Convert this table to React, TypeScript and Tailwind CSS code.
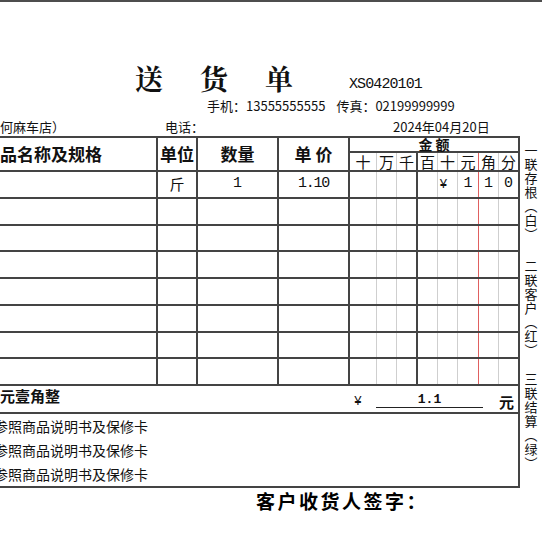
const line = 'border-[#444]';

const amountCols = [
  { w: 'w-[27px]', br: 'border-r border-[#cfcfcf]', label: '十' },
  { w: 'w-[20px]', br: 'border-r border-[#cfcfcf]', label: '万' },
  { w: 'w-[21px]', br: 'border-r-2 border-[#444]', label: '千' },
  { w: 'w-[20px]', br: 'border-r border-[#cfcfcf]', label: '百' },
  { w: 'w-[20px]', br: 'border-r border-[#cfcfcf]', label: '十' },
  { w: 'w-[21px]', br: 'border-r border-[#e06060]', label: '元' },
  { w: 'w-[20px]', br: 'border-r border-[#cfcfcf]', label: '角' },
  { w: 'w-[19px]', br: '', label: '分' },
];

const rows = [
  { unit: '斤', qty: '1', price: '1.10', amount: ['', '', '', '', '¥', '1', '1', '0'] },
  { unit: '', qty: '', price: '', amount: [] },
  { unit: '', qty: '', price: '', amount: [] },
  { unit: '', qty: '', price: '', amount: [] },
  { unit: '', qty: '', price: '', amount: [] },
  { unit: '', qty: '', price: '', amount: [] },
  { unit: '', qty: '', price: '', amount: [] },
  { unit: '', qty: '', price: '', amount: [] },
];

// vertical forms of the brackets so they stack like the printed copy labels
const copies = [
  ['一', '联', '存', '根', '︵', '白', '︶'],
  ['二', '联', '客', '户', '︵', '红', '︶'],
  ['三', '联', '结', '算', '︵', '绿', '︶'],
];

function DataRow({ unit, qty, price, amount }: (typeof rows)[number]) {
  return (
    <div className={`flex flex-1 border-b-2 ${line}`}>
      <div className={`w-[158px] border-r-2 ${line}`} />
      <div className={`flex w-[40px] items-center justify-center border-r-2 ${line} text-[15px]`}>
        {unit}
      </div>
      <div
        className={`flex w-[81px] items-center justify-center border-r-2 ${line} font-['Liberation_Mono',monospace] text-[15px]`}
      >
        {qty}
      </div>
      <div
        className={`flex w-[71px] items-center justify-center border-r-2 ${line} font-['Liberation_Mono',monospace] text-[15px] tracking-[-1.2px]`}
      >
        {price}
      </div>
      <div className={`flex w-[170px] border-r-2 ${line}`}>
        {amountCols.map((c, i) => (
          <div
            key={i}
            className={`flex ${c.w} ${c.br} items-center justify-center font-['Liberation_Mono',monospace] text-[15px]`}
          >
            <span className={amount[i] === '¥' ? 'pr-[8px] text-[13px]' : ''}>{amount[i]}</span>
          </div>
        ))}
      </div>
    </div>
  );
}

export default function App() {
  return (
    <div className="h-[542px] w-[542px] overflow-hidden bg-white font-['Noto_Sans_CJK_SC',sans-serif] text-[#111]">
      <div className="h-[2px] bg-[#4d4d4d]" />
      <div className="flex">
        <div className="w-[520px]">
          <div className="flex items-end pt-[62px]">
            <div className="ml-[135px] font-['Noto_Serif_CJK_SC','Noto_Sans_CJK_SC',serif] text-[28px] leading-[28px] font-bold tracking-[37px]">
              送货单
            </div>
            <div className="ml-[19px] font-['Liberation_Mono',monospace] text-[15px] leading-[15px] tracking-[-0.9px]">
              XS0420101
            </div>
          </div>

          <div className="mt-[7px] flex pl-[207px] text-[13px] leading-[13px]">
            <span>手机：13555555555</span>
            <span className="ml-[11px]">传真：02199999999</span>
          </div>

          <div className="mt-[8px] flex text-[13px] leading-[13px]">
            <span className="w-[165px]">何麻车店）</span>
            <span className="w-[228px]">电话：</span>
            <span>2024年04月20日</span>
          </div>

          <div className={`mt-[3px] flex h-[36px] border-y-2 ${line}`}>
            <div className={`flex w-[158px] items-center border-r-2 ${line} text-[17px] font-bold`}>
              品名称及规格
            </div>
            <div className={`flex w-[40px] items-center justify-center border-r-2 ${line} text-[17px] font-bold`}>
              单位
            </div>
            <div className={`flex w-[81px] items-center justify-center border-r-2 ${line} text-[17px] font-bold`}>
              数量
            </div>
            <div className={`flex w-[71px] items-center justify-center border-r-2 ${line} text-[17px] font-bold`}>
              单 价
            </div>
            <div className={`flex w-[170px] flex-col border-r-2 ${line}`}>
              <div
                className={`flex h-[15px] items-center justify-center border-b-2 ${line} text-[14px] leading-[13px] font-bold`}
              >
                金 额
              </div>
              <div className="flex flex-1">
                {amountCols.map((c, i) => (
                  <div
                    key={i}
                    className={`flex ${c.w} ${c.br} items-center justify-center text-[15px] leading-[17px]`}
                  >
                    {c.label}
                  </div>
                ))}
              </div>
            </div>
          </div>

          <div className="flex h-[214px] flex-col">
            {rows.map((r, i) => (
              <DataRow key={i} {...r} />
            ))}
          </div>

          <div className={`flex h-[28px] items-center border-r-2 border-b-2 ${line}`}>
            <span className="w-[354px] pb-[6px] text-[15px] font-bold">元壹角整</span>
            <span className="w-[22px] pt-[6px] font-['Liberation_Mono',monospace] text-[13px]">¥</span>
            <span className="h-[17px] w-[107px] border-b border-[#222] text-center font-['Liberation_Mono',monospace] text-[13px] leading-[17px] font-bold">
              1.1
            </span>
            <span className="ml-[16px] pt-[6px] text-[15px] font-bold">元</span>
          </div>

          <div className={`h-[74px] border-r-2 border-b-2 ${line} text-[14px] leading-[24px]`}>
            <div className="-ml-[6px]">参照商品说明书及保修卡</div>
            <div className="-ml-[6px]">参照商品说明书及保修卡</div>
            <div className="-ml-[6px]">参照商品说明书及保修卡</div>
          </div>

          <div className="mt-[3px] pl-[256px] text-[19px] leading-[19px] font-bold tracking-[2.5px] text-black">
            客户收货人签字：
          </div>
        </div>

        <div className="flex w-[22px] flex-col items-center pt-[141px]">
          {copies.map((chars, i) => (
            <div
              key={i}
              className={`flex flex-col items-center text-[13px] leading-[14px] ${
                i === 0 ? '' : i === 1 ? 'mt-[18px]' : 'mt-[15px]'
              }`}
            >
              {chars.map((ch, j) => (
                <span key={j} className="h-[14px]">
                  {ch}
                </span>
              ))}
            </div>
          ))}
        </div>
      </div>
    </div>
  );
}
